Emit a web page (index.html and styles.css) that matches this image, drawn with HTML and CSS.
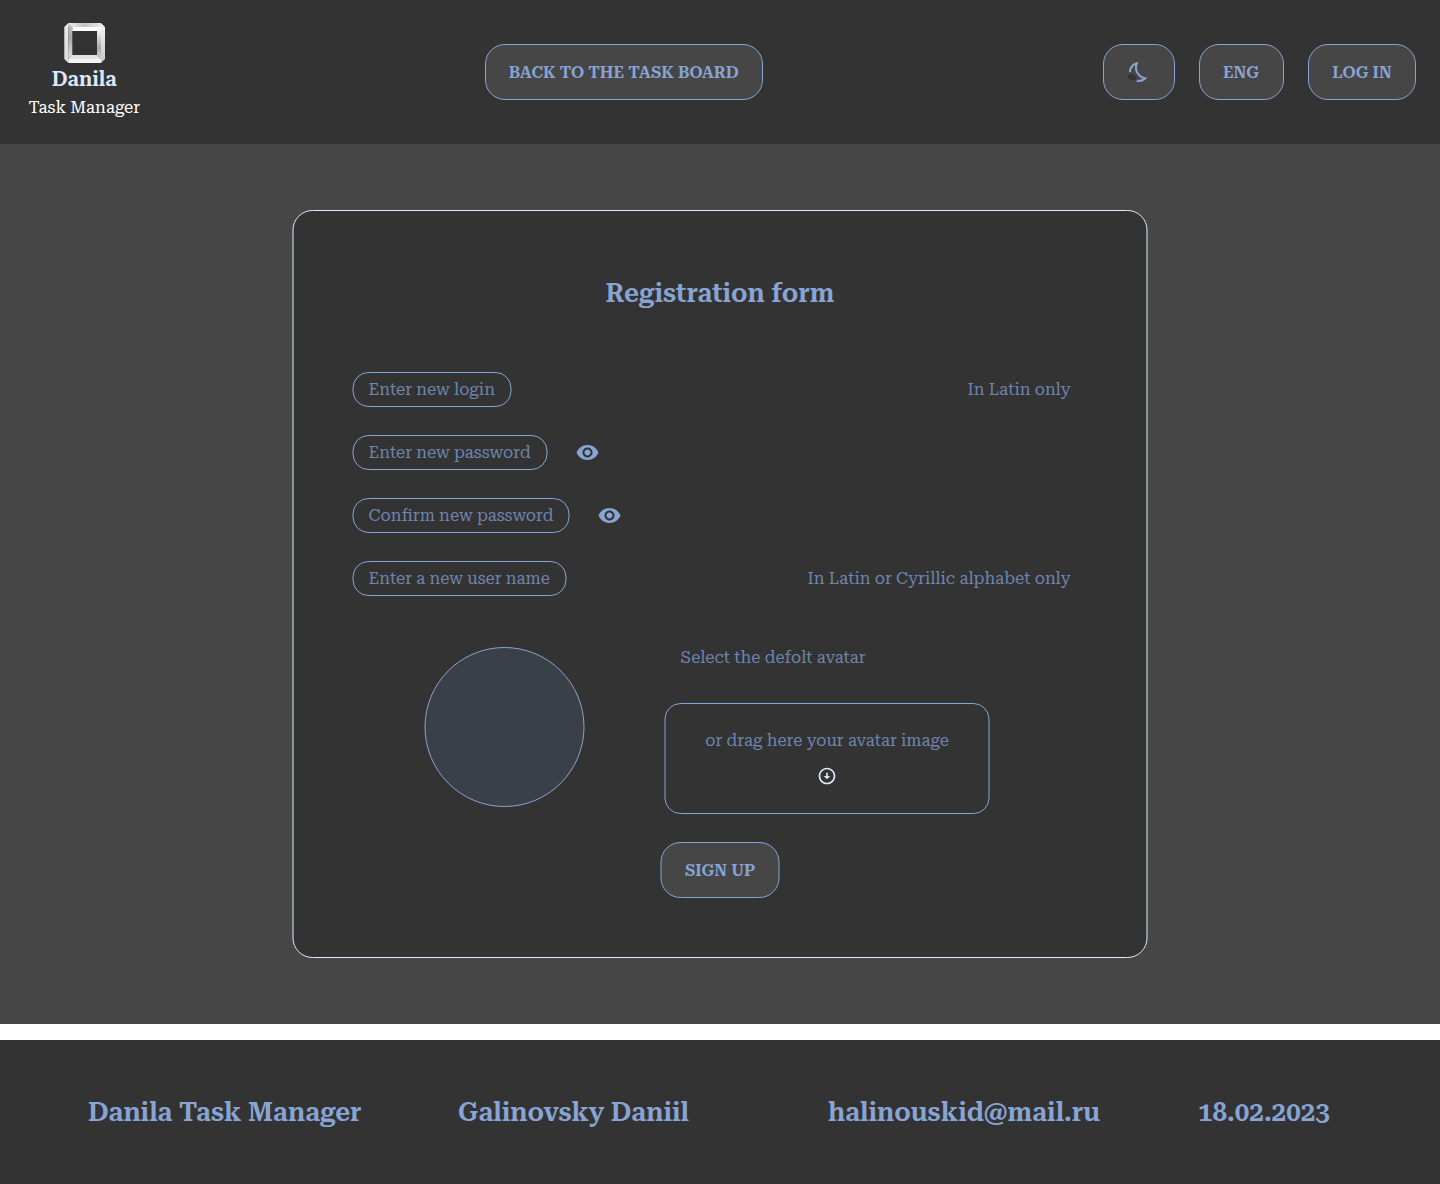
FILE: index.html
```html
<!DOCTYPE html>
<html lang="en">
<head>
<meta charset="utf-8">
<title>Danila Task Manager</title>
<link rel="stylesheet" href="styles.css">
</head>
<body>
<header class="header">
  <a class="logo">
    <svg class="logo-mark" width="41" height="40" viewBox="0 0 41 40">
      <defs>
        <linearGradient id="top"><stop offset="0" stop-color="#eee"/><stop offset=".45" stop-color="#c4c4c4"/><stop offset="1" stop-color="#f4f4f4"/></linearGradient>
        <linearGradient id="left" x1="0" y1="0" x2="0" y2="1"><stop offset="0" stop-color="#ececec"/><stop offset="1" stop-color="#dcdcdc"/></linearGradient>
        <linearGradient id="inner" x1="0" y1="0" x2="0" y2="1"><stop offset="0" stop-color="#c4c4c4"/><stop offset=".4" stop-color="#a8a8a8"/><stop offset="1" stop-color="#e2e2e2"/></linearGradient>
        <linearGradient id="right" x1="0" y1="0" x2="0" y2="1"><stop offset="0" stop-color="#f4f4f4"/><stop offset=".6" stop-color="#a6a6a6"/><stop offset="1" stop-color="#d8d8d8"/></linearGradient>
        <linearGradient id="edge" x1="0" y1="0" x2="0" y2="1"><stop offset="0" stop-color="#f0f0f0"/><stop offset="1" stop-color="#c8c8c8"/></linearGradient>
      </defs>
      <path fill="url(#top)" d="M4 0H37L41 4H4z"/>
      <path fill="url(#left)" d="M.3 4L4.3 0V40L.3 36z"/>
      <path fill="url(#inner)" d="M4.3 0L8.3 4V32L4.3 36z"/>
      <path fill="#fff" d="M8.3 4H37V8H8.3z"/>
      <path fill="url(#right)" d="M33 8H37V36L33 32z"/>
      <path fill="url(#edge)" d="M37 4L41 4V36L37 40z"/>
      <path fill="#e2e2e2" d="M8.3 32H33L37 36H4.3z"/>
      <path fill="#f4f4f4" d="M4.3 36H37V40H4.3z"/>
    </svg>
    <span class="logo-name">Danila</span>
    <span class="logo-sub">Task Manager</span>
  </a>
  <button class="btn btn-back">BACK TO THE TASK BOARD</button>
  <nav class="actions">
    <button class="btn" aria-label="Dark theme">
      <svg width="24" height="24" viewBox="0 0 24 24"><path fill="currentColor" d="M19.78 17.51c-2.47 0-6.57-1.33-8.68-5.43C8.77 7.57 10.6 3.6 11.63 2.01 6.27 2.2 1.98 6.59 1.98 12c0 .14.02.28.02.42.61-.26 1.28-.42 1.98-.42 0-3.09 1.73-5.77 4.3-7.1C7.78 7.09 7.74 9.94 9.32 13c1.57 3.04 4.18 4.95 6.8 5.86-1.23.74-2.65 1.15-4.13 1.15-.5 0-1-.05-1.48-.14-.37.7-.94 1.27-1.64 1.64.98.32 2.03.5 3.11.5 3.5 0 6.58-1.8 8.37-4.52-.17.01-.37.02-.57.02z"/><path fill="#333" d="M7 16l-.18 0C6.4 14.84 5.3 14 4 14c-1.66 0-3 1.34-3 3s1.34 3 3 3h3c1.1 0 2-.9 2-2s-.9-2-2-2z"/></svg>
    </button>
    <button class="btn btn-lang">ENG</button>
    <button class="btn btn-login">LOG IN</button>
  </nav>
</header>

<main class="main">
  <form class="card">
    <h1 class="title">Registration form</h1>
    <div class="fields">
      <div class="row"><span class="field">Enter new login</span><span class="hint">In Latin only</span></div>
      <div class="row"><span class="field field-password">Enter new password</span>
        <svg class="eye" width="24" height="24" viewBox="0 -.5 24 24"><path d="M12 4.5C7 4.5 2.73 7.61 1 12c1.73 4.39 6 7.5 11 7.5s9.27-3.11 11-7.5c-1.73-4.39-6-7.5-11-7.5zM12 17c-2.76 0-5-2.24-5-5s2.24-5 5-5 5 2.24 5 5-2.24 5-5 5zm0-8c-1.66 0-3 1.34-3 3s1.34 3 3 3 3-1.34 3-3-1.34-3-3-3z"/></svg></div>
      <div class="row"><span class="field">Confirm new password</span>
        <svg class="eye" width="24" height="24" viewBox="0 -.5 24 24"><path d="M12 4.5C7 4.5 2.73 7.61 1 12c1.73 4.39 6 7.5 11 7.5s9.27-3.11 11-7.5c-1.73-4.39-6-7.5-11-7.5zM12 17c-2.76 0-5-2.24-5-5s2.24-5 5-5 5 2.24 5 5-2.24 5-5 5zm0-8c-1.66 0-3 1.34-3 3s1.34 3 3 3 3-1.34 3-3-1.34-3-3-3z"/></svg></div>
      <div class="row"><span class="field">Enter a new user name</span><span class="hint">In Latin or Cyrillic alphabet only</span></div>
    </div>
    <div class="avatar">
      <div class="avatar-preview"></div>
      <div class="avatar-source">
        <span class="avatar-select">Select the defolt avatar</span>
        <div class="dropzone">
          <span>or drag here your avatar image</span>
          <svg width="20" height="20" viewBox=".6 0 24 24"><path fill="#dfe7fb" d="M12 4c4.41 0 8 3.59 8 8s-3.59 8-8 8-8-3.59-8-8 3.59-8 8-8m0-2C6.48 2 2 6.48 2 12s4.48 10 10 10 10-4.48 10-10S17.52 2 12 2zm1 10V8h-2v4H8l4 4 4-4h-3z"/></svg>
        </div>
      </div>
    </div>
    <button class="btn submit" type="button">SIGN UP</button>
  </form>
</main>

<footer class="footer">
  <span>Danila Task Manager</span>
  <span>Galinovsky Daniil</span>
  <span>halinouskid@mail.ru</span>
  <span>18.02.2023</span>
</footer>
</body>
</html>
```
FILE: styles.css
```css
:root {
  --blue: #88a4d4;
  --blue-dim: #6e85ae;
  --panel: #333;
  --surface: #464646;
  --light: #dfe7fb;
}
* { box-sizing: border-box; }
body {
  margin: 0;
  background: #fff;
  color: var(--blue);
  font-family: "Roboto Serif", "DejaVu Serif Condensed", "DejaVu Serif", serif;
  font-size: 16.7px;
  font-weight: 380;
}
.header {
  height: 144px;
  padding: 0 24px;
  display: flex;
  align-items: center;
  justify-content: space-between;
  background: var(--panel);
}
.logo {
  width: 120.5px;
  height: 98px;
  display: flex;
  flex-direction: column;
  align-items: center;
}
.logo-mark { flex: none; }
.logo-name {
  font-size: 20px;
  font-weight: 600;
  line-height: 32px;
  color: var(--light);
}
.logo-sub {
  font-weight: 400;
  line-height: 25px;
  color: #fff;
}
.actions { display: flex; gap: 24px; }
.btn {
  height: 56px;
  padding: 0 23px;
  display: flex;
  align-items: center;
  justify-content: center;
  border: 1px solid var(--blue);
  border-radius: 20px;
  background: var(--surface);
  color: var(--blue);
  font: 600 16.4px "Roboto Serif", "DejaVu Serif Condensed", "DejaVu Serif", serif;
  white-space: nowrap;
}
.btn-back { width: 278px; padding: 0; }
.btn-lang { width: 85px; padding: 0 24px 0 23px; }
.btn-login { width: 108px; }
.main {
  height: 880px;
  padding-top: 66px;
  background: var(--surface);
}
.card {
  width: 855px;
  height: 748px;
  margin-left: 292px;
  padding: 62px 76px 0 59px;
  display: flex;
  flex-direction: column;
  border: 1px solid var(--light);
  border-radius: 20px;
  background: var(--panel);
  transform: translateX(.5px);
}
.title {
  margin: 0 -17px 59px 0;
  font-size: 26px;
  font-weight: 600;
  line-height: 40px;
  text-align: center;
}
.fields {
  display: flex;
  flex-direction: column;
  gap: 28px;
}
.row {
  height: 35px;
  display: flex;
  align-items: center;
  gap: 28px;
}
.field {
  height: 35px;
  padding: 0 15.3px 0 15px;
  border: 1px solid var(--blue);
  border-radius: 16px;
  font-weight: 400;
  line-height: 33px;
  color: var(--blue-dim);
}
.field-password { width: 195px; }
.hint {
  margin-left: auto;
  line-height: 35px;
  color: var(--blue-dim);
}
.eye {
  margin-bottom: 1px;
  fill: var(--blue);
}
.avatar {
  margin: 44px 0 28px 72px;
  display: flex;
  align-items: center;
  gap: 80px;
  font-weight: 400;
  color: var(--blue-dim);
}
.avatar-preview {
  width: 160px;
  height: 160px;
  border: 1px solid var(--blue);
  border-radius: 50%;
  background: #3b3f47;
}
.avatar-source {
  display: flex;
  flex-direction: column;
  gap: 28px;
}
.avatar-select {
  padding-left: 16px;
  line-height: 35px;
}
.dropzone {
  width: 325px;
  height: 111px;
  padding-top: 24px;
  display: flex;
  flex-direction: column;
  align-items: center;
  gap: 13px;
  border: 1px solid var(--blue);
  border-radius: 16px;
  line-height: 25px;
}
.submit {
  width: 119px;
  margin-right: -17px;
  align-self: center;
}
.footer {
  height: 144px;
  margin-top: 16px;
  padding-left: 88px;
  display: grid;
  grid-template-columns: 370px 370px 370px 1fr;
  align-items: center;
  background: var(--panel);
  font-size: 26px;
  font-weight: 600;
}
```
